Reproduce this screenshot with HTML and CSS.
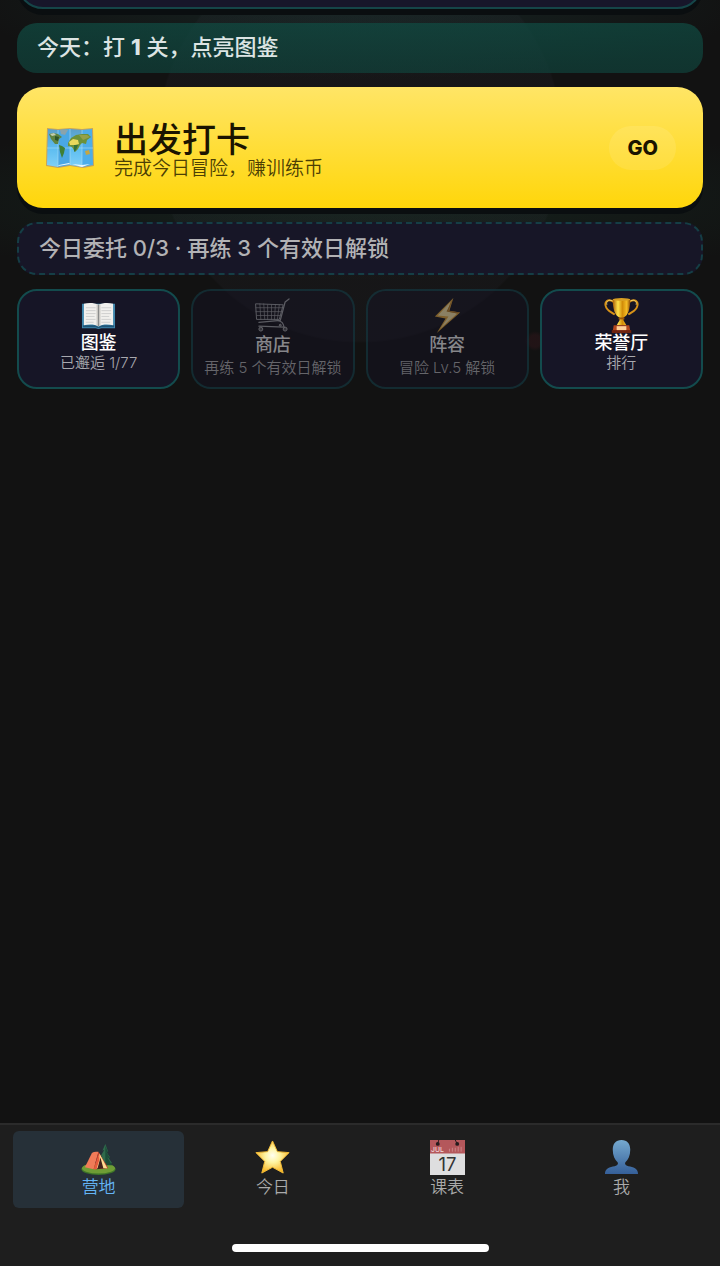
FILE: index.html
```
<!DOCTYPE html>
<html lang="zh-Hans">
<head>
  <meta charset="UTF-8">
  <meta name="viewport" content="width=device-width, initial-scale=1.0">
  <title>营地</title>
  <link rel="stylesheet" href="styles.css">
</head>
<body>
  <main class="camp">
    <section class="hero"></section>
    <p class="hint">今天：打 <strong>1</strong> 关，点亮图鉴</p>

    <button class="cta" type="button">
      <svg class="cta-icon" viewBox="0 0 48 48" aria-hidden="true">
        <defs>
          <linearGradient id="sea" x1="0" y1="0" x2="0" y2="1">
            <stop offset="0" stop-color="#5b9fc9"/>
            <stop offset="0.5" stop-color="#5cbcf0"/>
            <stop offset="1" stop-color="#7fd0f8"/>
          </linearGradient>
        </defs>
        <path d="M1 4l11 1 12-1 12 1 11-1 1 38-11 2-13-2-12 2-12-2z" fill="#c5a35e"/>
        <path d="M2 5l10 1v37L1 41z" fill="url(#sea)"/>
        <path d="M12 6l12-1v36l-12 2z" fill="#4aa7e4"/>
        <path d="M24 5l12 1v37l-12-2z" fill="url(#sea)"/>
        <path d="M36 6l10-1 1 36-11 2z" fill="#4dadea"/>
        <path d="M1 24h46M12 6v37M24 5v36M36 6v37" stroke="#a8dcf5" stroke-width="0.6" fill="none"/>
        <path d="M14 6l8 0-3 5-4-1z" fill="#8aa3ab"/>
        <path d="M3 10l4-1 5 1 4 3-3 2-1 5-3 0-4-5z" fill="#5f8440"/>
        <path d="M9 12l4 1-1 4-3-1z" fill="#2c552a"/>
        <path d="M4 10l4-1 2 2-4 1z" fill="#c3cdb0"/>
        <path d="M13 21l3 1 3 2-1 5-2 5-2-6z" fill="#3f7f35"/>
        <path d="M22 19l3-5 5-3 6-1 6 0 3 3-4 3-1 4-4-1-2 2-2 4-3 3-3-5-4-1z" fill="#6d9138"/>
        <path d="M23 18l4-3 5 1 1 4-4 1-5 0z" fill="#ead95c"/>
        <path d="M28 21l4 0-2 5-2 2z" fill="#34723a"/>
        <path d="M33 11l8 0 3 2-7 3z" fill="#94a04a"/>
        <path d="M39 27l4-1 1 4-4 1z" fill="#c6a642"/>
        <path d="M13 41l10-2 1 1-12 2zM26 40l10 1 8-1-8 3z" fill="#e9f8ff"/>
      </svg>
      <span class="cta-text">
        <span class="cta-title">出发打卡</span>
        <span class="cta-sub">完成今日冒险，赚训练币</span>
      </span>
      <span class="cta-go">GO</span>
    </button>

    <p class="quest">今日委托 0/3 · 再练 3 个有效日解锁</p>

    <div class="tiles">
      <button class="tile" type="button">
        <svg class="tile-icon" viewBox="0 0 36 36" aria-hidden="true">
          <path d="M1 6h34v25H21l-3 1-3-1H1z" fill="#3f86ac"/>
          <path d="M2 28h13l3 2 3-2h13v2H21l-3 1-3-1H2z" fill="#1f5678"/>
          <path d="M3 6c5-1.500 11-1 15 1 4-2 10-2.500 15-1v22c-5-1-11-1-15 1-4-2-10-2-15-1z" fill="#f1f0ed"/>
          <path d="M16 6.500l2 .5 2-.5v22l-2 .5-2-.5z" fill="#c9c7c3"/>
          <path d="M18 7v22" stroke="#77797a" stroke-width="0.800"/>
          <path d="M5 10h10M5 13h10M5 16h10M5 19h9M5 22h10M5 25h8M21 10h10M21 13h10M21 16h10M21 19h8M21 22h10M21 25h9" stroke="#c6c7c8" stroke-width="0.800"/>
        </svg>
        <span class="tile-title">图鉴</span>
        <span class="tile-sub">已邂逅 1/77</span>
      </button>
      <button class="tile locked" type="button" disabled>
        <svg class="tile-icon" viewBox="0 0 36 36" aria-hidden="true">
          <g fill="none" stroke="#a3a5aa" stroke-linecap="round" stroke-linejoin="round">
            <path d="M35 1l-4 3-5 19-22 2" stroke-width="1.300"/>
            <path d="M1 6l28 1-4 15-23 0z" stroke-width="1"/>
            <path d="M1 10h27M1 14h26M2 18h24M5 6l1 16M9 6l1 16M13 7l0 15M17 7l0 15M21 7l-1 15M25 7l-2 15" stroke-width="0.700"/>
            <path d="M23 23c5 1 6 3 7 7L4 29" stroke-width="1.200"/>
          </g>
          <g fill="#55575c" stroke="#b2b3b6">
            <circle cx="6" cy="32" r="2"/><circle cx="31" cy="32" r="2"/><circle cx="26" cy="28" r="1"/>
          </g>
        </svg>
        <span class="tile-title">商店</span>
        <span class="tile-sub">再练 5 个有效日解锁</span>
      </button>
      <button class="tile locked" type="button" disabled>
        <svg class="tile-icon" viewBox="0 0 36 36" aria-hidden="true">
          <path d="M24 0L5 19l11 2L7 36l24-21-11-2z" fill="#e5a93c"/>
          <path d="M21 4L8 18l11 1-8 12 17-15-10-2z" fill="#ffeaa9"/>
          <path d="M24 0l-2 5-3 8 12 2-3 1-11-2z" fill="#b77c26"/>
        </svg>
        <span class="tile-title">阵容</span>
        <span class="tile-sub">冒险 Lv.5 解锁</span>
      </button>
      <button class="tile" type="button">
        <svg class="tile-icon" viewBox="0 0 36 36" aria-hidden="true">
          <defs>
            <linearGradient id="gold">
              <stop offset="0" stop-color="#a85c08"/>
              <stop offset="0.300" stop-color="#ffe34a"/>
              <stop offset="0.550" stop-color="#d18b08"/>
              <stop offset="0.800" stop-color="#f5bd25"/>
              <stop offset="1" stop-color="#8d4a06"/>
            </linearGradient>
          </defs>
          <path d="M10 4C4 0 0 4 2 9c1 4 5 5 9 8M26 4c6-4 10 0 8 5-1 4-5 5-9 8" fill="none" stroke="#d79218" stroke-width="2"/>
          <path d="M9 3C4 1 2 4 3 7M27 3c5-2 7 1 6 4" fill="none" stroke="#ffe071" stroke-width="0.800"/>
          <path d="M9 1h18c0 10-2 17-7 19v3l3 5H13l3-5v-3C11 18 9 11 9 1z" fill="url(#gold)"/>
          <ellipse cx="18" cy="1.500" rx="9" ry="1.500" fill="#d89f23"/>
          <path d="M15 20h6v2h-6z" fill="#9b5609"/>
          <path d="M10 28h16l1 6H9z" fill="#b3471d"/>
          <path d="M8 33h20v3H8z" fill="#6f230f"/>
          <path d="M13 29h10v4H13z" fill="#ffd09a"/>
        </svg>
        <span class="tile-title">荣誉厅</span>
        <span class="tile-sub">排行</span>
      </button>
    </div>
  </main>

  <nav class="tabbar">
    <div class="tabs">
      <a class="tab active" href="#camp">
        <svg class="tab-icon" viewBox="0 0 36 36" aria-hidden="true">
          <ellipse cx="18" cy="30" rx="17.500" ry="6" fill="#3d7428"/>
          <ellipse cx="18" cy="29" rx="17" ry="5.500" fill="#6f9d35"/>
          <path d="M25 4l-3 7 2-1-4 7 2-1-4 8h14l-4-6 2 0-4-6 2 0z" fill="#2f6a4b"/>
          <path d="M25 6l3 7-2-1 4 7-3-1 5 8h-7z" fill="#1c4d38"/>
          <path d="M24 24h2v3h-2z" fill="#71452a"/>
          <path d="M18 12c-4 0-6 0-7 2L4 28l9 2z" fill="#f07b58"/>
          <path d="M18 12l10 17-15 1z" fill="#c8432d"/>
          <path d="M19 15l6 14-9 1z" fill="#43221b"/>
          <path d="M19 14l-5 16 3-1 3-11 3 11h4z" fill="#ffdb91"/>
          <path d="M19 14l0 6-3 10h-3z" fill="#e65a3d"/>
        </svg>
        <span>营地</span>
      </a>
      <a class="tab" href="#today">
        <svg class="tab-icon" viewBox="0 0 36 36" aria-hidden="true">
          <defs>
            <radialGradient id="star" cx="0.5" cy="0.450" r="0.550">
              <stop offset="0" stop-color="#fffef0"/>
              <stop offset="0.400" stop-color="#fff5a3"/>
              <stop offset="1" stop-color="#f9b625"/>
            </radialGradient>
          </defs>
          <path d="M18 1l5 11 12 1-9 9 3 12-11-6-11 6 3-12-9-9 12-1z" fill="url(#star)" stroke="#f5bd37" stroke-width="1" stroke-linejoin="round"/>
        </svg>
        <span>今日</span>
      </a>
      <a class="tab" href="#schedule">
        <svg class="tab-icon" viewBox="0 0 36 36" aria-hidden="true">
          <path d="M0 0h36v36H0z" fill="#dededf"/>
          <path d="M0 0h36v14H0z" fill="#b4575b"/>
          <circle cx="8" cy="4" r="2" fill="#241b1d"/><circle cx="28" cy="4" r="2" fill="#241b1d"/>
          <path d="M8 4l1-4M28 4l-2-4" stroke="#241b1d"/>
          <path d="M20 12V9M23 12V8M26 12V8M29 12V7M32 12V7" stroke="#ca8588"/>
          <text class="cal-month" x="1" y="12">JUL</text>
          <text class="cal-day" x="18" y="32" text-anchor="middle">17</text>
        </svg>
        <span>课表</span>
      </a>
      <a class="tab" href="#me">
        <svg class="tab-icon" viewBox="0 0 36 36" aria-hidden="true">
          <defs>
            <linearGradient id="person" x1="0" y1="0" x2="0" y2="1">
              <stop offset="0" stop-color="#75a9cf"/>
              <stop offset="1" stop-color="#355f99"/>
            </linearGradient>
          </defs>
          <path d="M18 0c-6 0-9 4-9 10 0 6 2 10 5 13 1 2 0 3-3 4-5 1-10 2-10 8h34c0-6-5-7-10-8-3-1-4-2-3-4 3-3 5-7 5-13 0-6-3-10-9-10z" fill="url(#person)"/>
        </svg>
        <span>我</span>
      </a>
    </div>
    <div class="home-bar"></div>
  </nav>
</body>
</html>
```
FILE: styles.css
```
* { box-sizing: border-box; }
body {
  margin: 0;
  min-height: 100vh;
  display: flex;
  flex-direction: column;
  background: #121212;
  color: #fff;
  font-family: Inter, "Noto Sans CJK SC", sans-serif;
}
p { margin: 0; }
button { border: 0; color: inherit; font: inherit; }

.camp {
  flex: 1;
  overflow: hidden;
  padding: 0 17px;
  display: flex;
  flex-direction: column;
  gap: 14px;
  background:
    radial-gradient(circle 10px at 535px 341px, rgba(120,30,45,0.15) 60%, transparent),
    radial-gradient(circle 203px at 50% 140px, rgba(160,150,200,0.03) 99%, transparent),
    radial-gradient(ellipse 55% 80px at 50% 0, rgba(30,80,75,0.3), transparent),
    radial-gradient(ellipse 70% 80px at 50% 200px, rgba(25,65,50,0.35), transparent);
}

/* lower edge of the scrolled hero card */
.hero {
  flex: none;
  height: 80px;
  margin-top: -71px;
  border: 2px solid #154548;
  border-radius: 26px;
  background: #17162a;
  box-shadow: 0 6px 0 #0a0e10;
}

.hint {
  padding: 7px 20px 9px;
  border-radius: 20px;
  background: linear-gradient(rgba(16,76,67,0.7), rgba(16,66,59,0.7));
  color: #dce4e3;
  font-size: 22px;
  font-weight: 500;
  line-height: 34px;
}
.hint strong { font-weight: 800; }

.cta {
  display: flex;
  align-items: center;
  gap: 20px;
  min-height: 121px;
  padding: 0 27px 0 29px;
  border-radius: 26px;
  background: linear-gradient(#ffe566, #ffd60a);
  box-shadow: 0 6px 0 #0a0e10;
  color: #1a1400;
  text-align: left;
}
.cta-icon { width: 48px; height: 48px; flex: none; }
.cta-text { flex: 1; display: flex; flex-direction: column; padding-top: 8px; }
.cta-title { font-size: 34px; font-weight: 500; line-height: 34px; }
.cta-sub { font-size: 19px; font-weight: 350; line-height: 24px; color: #4c3f04; }
.cta-go {
  padding: 8px 18px;
  border-radius: 22px;
  background: rgba(255,255,255,0.1);
  font-size: 20px;
  font-weight: 800;
  line-height: 28px;
}

.quest {
  padding: 8px 20px;
  border: 2px dashed #153e46;
  border-radius: 20px;
  background: #171627;
  color: #b2b2b5;
  font-size: 22px;
  font-weight: 500;
  line-height: 33px;
}

.tiles { display: grid; grid-template-columns: repeat(4, 1fr); gap: 11px; }
.tile {
  min-height: 100px;
  padding: 7px 0;
  display: flex;
  flex-direction: column;
  align-items: center;
  justify-content: flex-start;
  border: 2px solid #134b4d;
  border-radius: 20px;
  background: #161526;
  white-space: nowrap;
}
.tile-icon { width: 35px; height: 35px; flex: none; }
.tile-title { font-size: 18px; font-weight: 500; line-height: 20px; }
.tile-sub { font-size: 15px; font-weight: 350; line-height: 20px; color: #a8a8ae; }
.locked { border-color: rgba(19,75,77,0.45); background: rgba(22,21,38,0.45); }
.locked .tile-icon { opacity: 0.5; }
.locked .tile-title { line-height: 24px; color: #86868a; }
.locked .tile-sub { line-height: 22px; color: #65656a; }

.tabbar {
  position: sticky;
  bottom: 0;
  padding: 6px 13px 14px;
  border-top: 2px solid #2b2b2b;
  background: #1e1e1e;
}
.tabs { display: grid; grid-template-columns: repeat(4, 1fr); gap: 3px; }
.tab {
  height: 77px;
  padding-top: 9px;
  display: flex;
  flex-direction: column;
  align-items: center;
  border-radius: 6px;
  color: #aaa;
  font-size: 17px;
  font-weight: 350;
  line-height: 24px;
  text-decoration: none;
}
.tab.active { background: #263038; color: #64b5f6; }
.tab-icon { width: 35px; height: 35px; overflow: visible; }
.cal-month { font-size: 7px; font-weight: 500; fill: #f2d7d8; }
.cal-day { font-size: 19px; font-weight: 400; fill: #333; }
.home-bar {
  width: 257px;
  height: 8px;
  margin: 36px auto 0;
  border-radius: 4px;
  background: #fff;
}
```
